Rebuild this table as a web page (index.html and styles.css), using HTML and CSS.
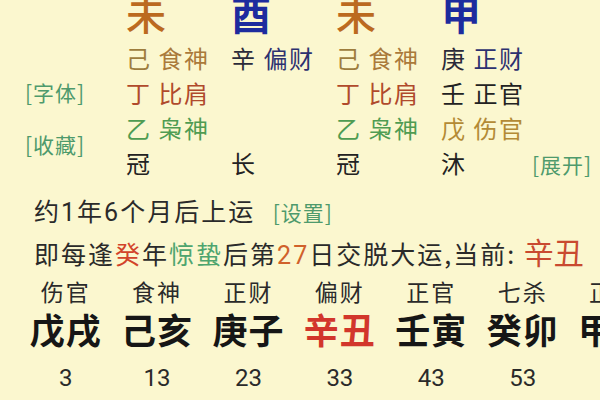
FILE: index.html
```html
<!DOCTYPE html>
<html lang="zh-CN">
<head>
<meta charset="utf-8">
<title>八字排盘</title>
<link rel="stylesheet" href="styles.css">
</head>
<body>
<main class="screen">
  <section class="pillars">
    <div class="side">
      <span class="link">[字体]</span>
      <span class="link">[收藏]</span>
    </div>

    <div class="branch c-orange">未</div>
    <div class="branch bold c-blue">酉</div>
    <div class="branch c-orange">未</div>
    <div class="branch bold c-blue">甲</div>
    <div class="spacer"></div>

    <div class="hid"><span class="c-khaki">己</span> <span class="c-tan">食神</span></div>
    <div class="hid"><span class="c-dark">辛</span> <span class="c-navy">偏财</span></div>
    <div class="hid"><span class="c-khaki">己</span> <span class="c-tan">食神</span></div>
    <div class="hid"><span class="c-dark">庚</span> <span class="c-navy">正财</span></div>
    <div class="spacer"></div>

    <div class="hid c-rust">丁 比肩</div>
    <div class="hid"></div>
    <div class="hid c-rust">丁 比肩</div>
    <div class="hid c-black">壬 正官</div>
    <div class="spacer"></div>

    <div class="hid c-green">乙 枭神</div>
    <div class="hid"></div>
    <div class="hid c-green">乙 枭神</div>
    <div class="hid c-gold">戊 伤官</div>
    <div class="spacer"></div>

    <div class="hid c-black">冠</div>
    <div class="hid c-black">长</div>
    <div class="hid c-black">冠</div>
    <div class="hid c-black">沐</div>
    <div class="hid"><span class="link">[展开]</span></div>
  </section>

  <section class="luck">
    <p class="line">约<span class="num">1</span>年<span class="num">6</span>个月后上运 <span class="link small">[设置]</span></p>
    <p class="line">即每逢<span class="c-red">癸</span>年<span class="c-jade">惊蛰</span>后第<span class="num c-orange2">27</span>日交脱大运,当前: <span class="current">辛丑</span></p>
  </section>

  <section class="dayun">
    <div class="god">伤官</div>
    <div class="god">食神</div>
    <div class="god">正财</div>
    <div class="god">偏财</div>
    <div class="god">正官</div>
    <div class="god">七杀</div>
    <div class="god">正印</div>

    <div class="pair">戊戌</div>
    <div class="pair">己亥</div>
    <div class="pair">庚子</div>
    <div class="pair active">辛丑</div>
    <div class="pair">壬寅</div>
    <div class="pair">癸卯</div>
    <div class="pair">甲辰</div>

    <div class="age">3</div>
    <div class="age">13</div>
    <div class="age">23</div>
    <div class="age">33</div>
    <div class="age">43</div>
    <div class="age">53</div>
    <div class="age">63</div>
  </section>
</main>
</body>
</html>
```

FILE: styles.css
```css
html, body {
  margin: 0;
  padding: 0;
}

body {
  width: 600px;
  height: 400px;
  overflow: hidden;
  background: #fbf7cf;
  font-family: "Noto Sans CJK SC", "Noto Sans", sans-serif;
  color: #222;
}

.screen {
  width: 600px;
  height: 400px;
  overflow: hidden;
}

/* ---------- four pillars ---------- */
.pillars {
  display: grid;
  grid-template-columns: 126px 105px 105px 105px 91px 1fr;
  grid-template-rows: 40px repeat(4, 35px);
}

.side {
  grid-column: 1;
  grid-row: 1 / 6;
  display: flex;
  flex-direction: column;
  align-items: flex-start;
  padding: 75px 0 0 25px;
  gap: 17px;
}

.link {
  color: #4e9a6c;
  font-size: 21px;
  line-height: 35px;
  letter-spacing: 1px;
}

.link.small {
  line-height: 36px;
  margin-left: 10px;
}

.branch {
  font-size: 40px;
  line-height: 26px;
  font-weight: 500;
  letter-spacing: 0;
  align-self: start;
}

.branch.bold {
  font-weight: 700;
}

.hid {
  font-size: 24px;
  line-height: 35px;
  letter-spacing: 1.5px;
  white-space: nowrap;
}

.c-orange { color: #bb6a1f; }
.c-blue   { color: #1d2b9e; }
.c-khaki  { color: #9e7d3d; }
.c-tan    { color: #aa7a3b; }
.c-dark   { color: #2b2b3a; }
.c-navy   { color: #2d3170; }
.c-rust   { color: #b04a2c; }
.c-black  { color: #222; }
.c-green  { color: #4f9c52; }
.c-gold   { color: #b38a35; }
.c-red    { color: #d2432a; }
.c-jade   { color: #4ea56e; }
.c-orange2 { color: #d0612b; }

/* ---------- luck text ---------- */
.luck {
  padding: 12px 0 0 34px;
}

.line {
  margin: 0;
  font-size: 25px;
  line-height: 36px;
  letter-spacing: 2px;
  white-space: nowrap;
  color: #2a2a2a;
}

.line + .line {
  margin-top: 4px;
}

.num {
  font-family: Roboto, "Noto Sans", sans-serif;
}

.current {
  font-size: 30px;
  line-height: 30px;
  letter-spacing: 0;
  color: #c94a30;
}

/* ---------- da yun ---------- */
.dayun {
  display: grid;
  grid-template-columns: repeat(7, 91.4px);
  grid-template-rows: 36px 51px 30px;
  margin: 2px 0 0 20px;
  justify-items: center;
  align-items: start;
}

.god {
  font-size: 23px;
  line-height: 30px;
  letter-spacing: 2px;
  color: #2a2a2a;
  white-space: nowrap;
}

.pair {
  font-size: 35px;
  line-height: 34px;
  font-weight: 700;
  letter-spacing: 1px;
  color: #161616;
  white-space: nowrap;
}

.pair.active {
  color: #d2362b;
}

.age {
  font-family: Roboto, "Noto Sans", sans-serif;
  font-size: 24px;
  line-height: 30px;
  color: #2a2a2a;
}
```
